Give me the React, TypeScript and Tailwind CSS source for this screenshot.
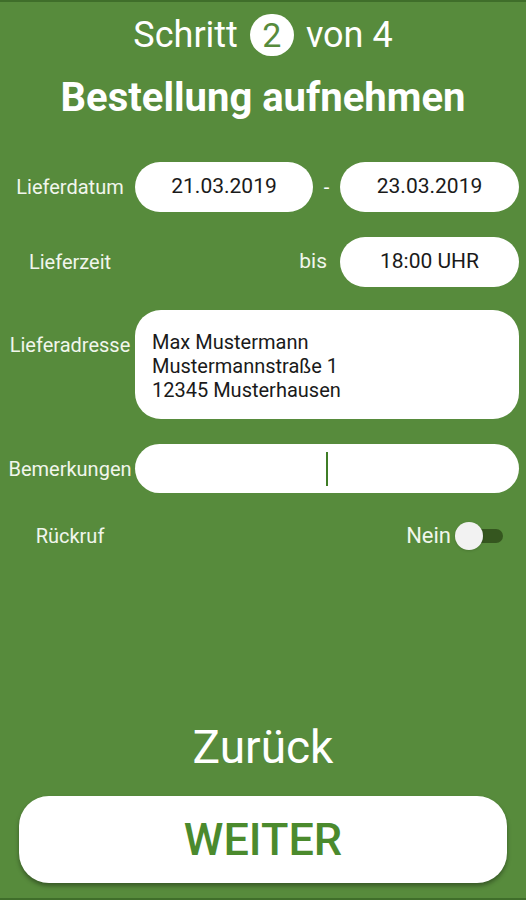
export default function App() {
  const label = "w-[140px] shrink-0 text-center text-[20px] text-[#f1f6ec]";
  const pill =
    "flex h-[50px] items-center justify-center rounded-full bg-white text-[21px] text-[#1a1a1a]";

  return (
    <div
      className="flex h-[900px] w-[526px] flex-col border-y-2 border-[#3f6e2a] bg-[#578b3c] text-white"
      style={{ fontFamily: "Roboto, 'Liberation Sans', sans-serif" }}
    >
      {/* Header */}
      <div className="mt-[12px] flex items-center justify-center gap-[12px] text-[36px] leading-none">
        <span>Schritt</span>
        <span className="flex h-[42px] w-[44px] items-center justify-center rounded-full bg-white text-[34px] text-[#578b3c]">
          2
        </span>
        <span>von 4</span>
      </div>
      <h1 className="mt-[22px] text-center text-[40px] font-bold leading-none">
        Bestellung aufnehmen
      </h1>

      {/* Form */}
      <div className="mt-[44px] flex flex-col pr-[7px]">
        <div className="flex items-center">
          <span className={label}>Lieferdatum</span>
          <div className={`${pill} ml-[-5px] w-[178px]`}>21.03.2019</div>
          <span className="w-[27px] text-center text-[20px]">-</span>
          <div className={`${pill} w-[179px]`}>23.03.2019</div>
        </div>

        <div className="mt-[25px] flex items-center">
          <span className={label}>Lieferzeit</span>
          <span className="ml-auto mr-[13px] text-[21px] text-[#f1f6ec]">bis</span>
          <div className={`${pill} w-[179px]`}>18:00 UHR</div>
        </div>

        <div className="mt-[23px] flex items-start">
          <span className={`${label} mt-[20px]`}>Lieferadresse</span>
          <div className="ml-[-5px] h-[109px] flex-1 rounded-[26px] bg-white px-[17px] pt-[20px] text-[20px] leading-[24px] text-[#1a1a1a]">
            <div>Max Mustermann</div>
            <div>Mustermannstraße 1</div>
            <div>12345 Musterhausen</div>
          </div>
        </div>

        <div className="mt-[25px] flex items-center">
          <span className={label}>Bemerkungen</span>
          <div className="ml-[-5px] flex h-[49px] flex-1 items-center rounded-full bg-white pl-[191px]">
            <span className="h-[34px] w-[2px] bg-[#3f7d26]" />
          </div>
        </div>

        <div className="mt-[26px] flex items-center">
          <span className={label}>Rückruf</span>
          <span className="ml-auto text-[22px] text-[#f1f6ec]">Nein</span>
          <div className="relative ml-[4px] mr-[16px] h-[28px] w-[48px]">
            <div className="absolute left-[6px] right-0 top-[7px] h-[14px] rounded-full bg-[#35561f]" />
            <div className="absolute left-0 top-0 h-[28px] w-[28px] rounded-full bg-[#f2f2f2] shadow" />
          </div>
        </div>
      </div>

      {/* Footer */}
      <div className="mt-auto flex flex-col items-center pb-[15px]">
        <button className="text-[46px] leading-none text-white">Zurück</button>
        <button className="mt-[26px] flex h-[87px] w-[488px] items-center justify-center rounded-[30px] bg-white text-[45px] font-medium text-[#4b8a2d] shadow-[0_3px_4px_rgba(0,0,0,0.35)]">
          WEITER
        </button>
      </div>
    </div>
  );
}
